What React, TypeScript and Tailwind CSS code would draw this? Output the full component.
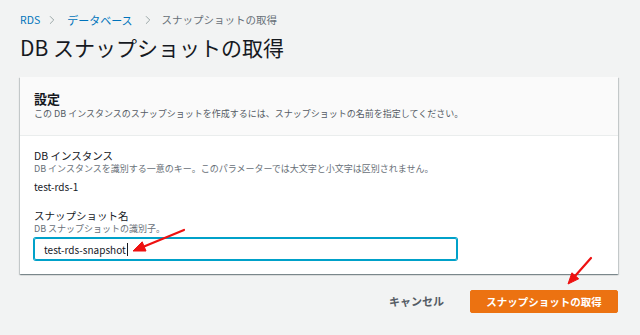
import { ChevronRight } from "lucide-react";

function Arrows() {
  return (
    <svg className="pointer-events-none absolute inset-0" width="640" height="335" viewBox="0 0 640 335">
      <g fill="#ee1111" stroke="#ee1111">
        <line x1="184" y1="230" x2="144" y2="246.4" strokeWidth="2.2" strokeLinecap="round" />
        <polygon points="133,251 146,251 142.2,241.8" strokeWidth="1" strokeLinejoin="round" />
        <line x1="591" y1="258" x2="575.3" y2="275.8" strokeWidth="2.2" strokeLinecap="round" />
        <polygon points="568,284 578.7,278.8 571.9,272.8" strokeWidth="1" strokeLinejoin="round" />
      </g>
    </svg>
  );
}

export default function App() {
  return (
    <div className="relative w-[640px] h-[335px] overflow-hidden bg-[#f2f3f3] px-5 pt-[13px] font-['Noto_Sans_CJK_JP',sans-serif] text-[#16191f]">
      {/* breadcrumb */}
      <nav className="flex items-center text-[10.5px] leading-[14px]">
        <span className="text-[#0073bb]">RDS</span>
        <ChevronRight size={14} strokeWidth={1.4} className="ml-[5px] mr-[8px] text-[#879596]" />
        <span className="text-[11px] text-[#0073bb]">データベース</span>
        <ChevronRight size={14} strokeWidth={1.4} className="ml-[8px] mr-[7px] text-[#879596]" />
        <span className="text-[#687078]">スナップショットの取得</span>
      </nav>

      <h1 className="mt-[6px] text-[21px] leading-[28px] font-normal">DB スナップショットの取得</h1>

      <div className="mt-4 w-[598px] bg-white shadow-[0_1px_1px_0_rgba(0,28,36,0.3),1px_1px_1px_0_rgba(0,28,36,0.15),-1px_1px_1px_0_rgba(0,28,36,0.15)]">
        <div className="bg-[#fafafa] border-b border-[#eaeded] px-[14px] pt-[13px] pb-[15px]">
          <h2 className="text-[13px] leading-[18px] font-bold">設定</h2>
          <p className="text-[9px] leading-[12px] text-[#545b64]">
            この DB インスタンスのスナップショットを作成するには、スナップショットの名前を指定してください。
          </p>
        </div>

        <div className="px-[14px] pt-3 pb-[14px]">
          <div className="text-[10.5px] leading-[15px]">DB インスタンス</div>
          <div className="text-[9px] leading-[12px] text-[#687078]">
            DB インスタンスを識別する一意のキー。このパラメーターでは大文字と小文字は区別されません。
          </div>
          <div className="mt-[4px] text-[10px] leading-[15px]">test-rds-1</div>

          <div className="mt-[14px] text-[10.5px] leading-[15px]">スナップショット名</div>
          <div className="text-[9px] leading-[12px] text-[#687078]">DB スナップショットの識別子。</div>
          <div className="mt-[3px] flex h-[22px] w-[423px] items-center rounded-[2px] border border-[#00a1c9] px-[9px] shadow-[0_0_0_1px_#00a1c9]">
            <span className="text-[10px] leading-[15px]">test-rds-snapshot</span>
            <span className="ml-px h-[13px] w-px bg-[#16191f]" />
          </div>
        </div>
      </div>

      <div className="mt-4 flex w-[598px] items-center justify-end gap-[14px]">
        <button className="px-3 text-[11px] font-bold leading-[23px] text-[#545b64]">キャンセル</button>
        <button className="h-[23px] w-[148px] rounded-[2px] border border-[#ec7211] bg-[#ec7211] text-[10.5px] font-bold text-white">
          スナップショットの取得
        </button>
      </div>

      <Arrows />
    </div>
  );
}
